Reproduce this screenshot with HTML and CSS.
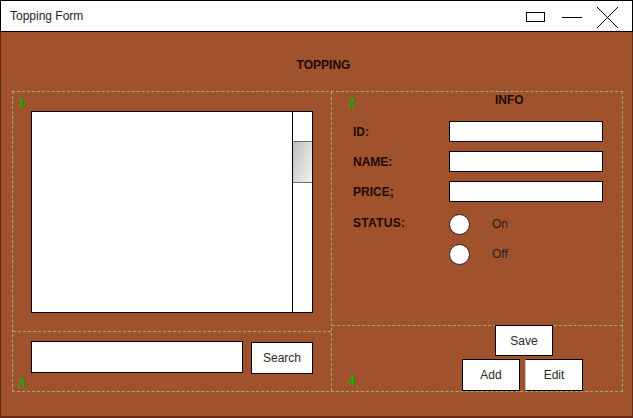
FILE: index.html
```html
<!DOCTYPE html>
<html>
<head>
<meta charset="utf-8">
<link rel="stylesheet" href="styles.css">
</head>
<body>
<div class="window">
  <div class="titlebar">
    <span class="title">Topping Form</span>
    <svg class="controls" width="111" height="30" viewBox="0 0 111 30">
      <rect x="5.5" y="11.5" width="18" height="9" fill="none" stroke="#000" stroke-width="1"/>
      <line x1="41" y1="16.5" x2="61" y2="16.5" stroke="#000" stroke-width="1"/>
      <line x1="76" y1="6" x2="97" y2="27" stroke="#000" stroke-width="1"/>
      <line x1="97" y1="6" x2="76" y2="27" stroke="#000" stroke-width="1"/>
    </svg>
  </div>
  <div class="content">
    <div class="heading">TOPPING</div>
    <div class="frame">
      <div class="col col-left">
        <div class="panel panel-1">
          <span class="num num-top">1</span>
          <div class="listbox">
            <div class="list-area"></div>
            <div class="scrollbar"><div class="thumb"></div></div>
          </div>
        </div>
        <div class="panel panel-3">
          <span class="num num-3">3</span>
          <div class="search-row">
            <div class="textbox search-box"></div>
            <div class="btn btn-search">Search</div>
          </div>
        </div>
      </div>
      <div class="col col-right">
        <div class="panel panel-2">
          <span class="num num-top num-right">2</span>
          <div class="info-title">INFO</div>
          <div class="info-grid">
            <div class="lbl">ID:</div>
            <div class="textbox field"></div>
            <div class="lbl">NAME:</div>
            <div class="textbox field"></div>
            <div class="lbl">PRICE;</div>
            <div class="textbox field"></div>
            <div class="lbl lbl-status">STATUS:</div>
            <div class="radios">
              <div class="radio-row"><span class="radio"></span><span class="radio-text">On</span></div>
              <div class="radio-row"><span class="radio"></span><span class="radio-text">Off</span></div>
            </div>
          </div>
        </div>
        <div class="panel panel-4">
          <span class="num num-4 num-right">4</span>
          <div class="btn btn-save">Save</div>
          <div class="btn-row">
            <div class="btn btn-add">Add</div>
            <div class="btn btn-edit">Edit</div>
          </div>
        </div>
      </div>
    </div>
  </div>
</div>
</body>
</html>
```
FILE: styles.css
```css
* { box-sizing: border-box; }
html, body { margin: 0; padding: 0; background: #ffffff; }
body { font-family: "Liberation Sans", Arial, sans-serif; }

.window {
  width: 633px;
  height: 418px;
  display: flex;
  flex-direction: column;
}

.titlebar {
  height: 32px;
  border: 1px solid #000;
  background: #fff;
  display: flex;
  align-items: center;
  padding-left: 9px;
}
.title { font-size: 12px; color: #1e1e1e; }
.controls { margin-left: auto; display: block; align-self: stretch; }

.content {
  flex: 1;
  background: #a0522d;
  border: 1px solid #6b2a12;
  border-top: none;
  border-bottom-width: 2px;
  padding: 26px 9px 0 11px;
}

.heading {
  font-size: 12px;
  font-weight: bold;
  line-height: 14px;
  height: 14px;
  color: #1c0c04;
  text-align: center;
  padding-left: 12px;
  margin-bottom: 19px;
}

.frame {
  display: flex;
  height: 301px;
  border: 1px dashed #8fb56c;
}

.col { display: flex; flex-direction: column; }
.col-left { width: 319px; border-right: 1px dashed #8fb56c; }
.col-right { flex: 1; }

.panel { position: relative; }
.panel-1 { height: 240px; border-bottom: 1px dashed #8fb56c; padding: 19px 0 0 18px; }
.panel-3 { flex: 1; padding: 9px 0 0 18px; }
.panel-2 { height: 236px; border-bottom: 1px dashed #8fb56c; padding-top: 1px; }
.panel-4 { flex: 1; display: flex; flex-direction: column; }

.num {
  position: absolute;
  left: 5px;
  font-size: 13px;
  line-height: 15px;
  font-weight: bold;
  color: #00b400;
}
.num-right { left: 16px; }
.num-top { top: 3px; }
.num-3 { top: 43px; }
.num-4 { top: 47px; }

.listbox {
  width: 282px;
  height: 202px;
  border: 1px solid #000;
  background: #fff;
  display: flex;
}
.list-area { flex: 1; }
.scrollbar {
  width: 20px;
  border-left: 1px solid #000;
  padding-top: 29px;
}
.thumb {
  height: 42px;
  border-top: 1px solid #6e6e6e;
  border-bottom: 1px solid #6e6e6e;
  background: linear-gradient(110deg, #bdbdbd 0%, #dcdcdc 55%, #f2f2f2 100%);
}

.search-row { display: flex; align-items: flex-start; gap: 8px; }
.textbox { background: #fff; border: 1px solid #000; }
.search-box { width: 212px; height: 32px; }

.btn {
  background: #fff;
  border: 1px solid #000;
  display: flex;
  align-items: center;
  justify-content: center;
  font-size: 12px;
  color: #2a2a2a;
}
.btn-search { width: 62px; height: 32px; margin-top: 1px; }

.info-title {
  font-size: 12px;
  font-weight: bold;
  line-height: 14px;
  color: #1c0c04;
  margin-left: 163px;
  margin-bottom: 14px;
}

.info-grid {
  display: grid;
  grid-template-columns: 96px 154px;
  row-gap: 9px;
  padding-left: 21px;
}
.lbl {
  font-size: 12px;
  font-weight: bold;
  color: #1c0c04;
  align-self: center;
}
.lbl-status { align-self: start; padding-top: 2px; margin-top: 3px; letter-spacing: 0.3px; }
.field { height: 21px; }

.radios {
  display: flex;
  flex-direction: column;
  gap: 10px;
  margin-top: 3px;
}
.radio-row { display: flex; align-items: center; height: 20px; }
.radio {
  width: 21px;
  height: 21px;
  border-radius: 50%;
  background: #fff;
  border: 1px solid #222;
}
.radio-text { font-size: 12px; color: #222; margin-left: 22px; }

.btn-save { width: 58px; height: 31px; margin: -1px 0 0 163px; }
.btn-row { display: flex; gap: 5px; margin: 3px 0 0 130px; }
.btn-add, .btn-edit { width: 58px; height: 32px; }
.btn-edit { border-left-color: #c4c4c4; }
```
